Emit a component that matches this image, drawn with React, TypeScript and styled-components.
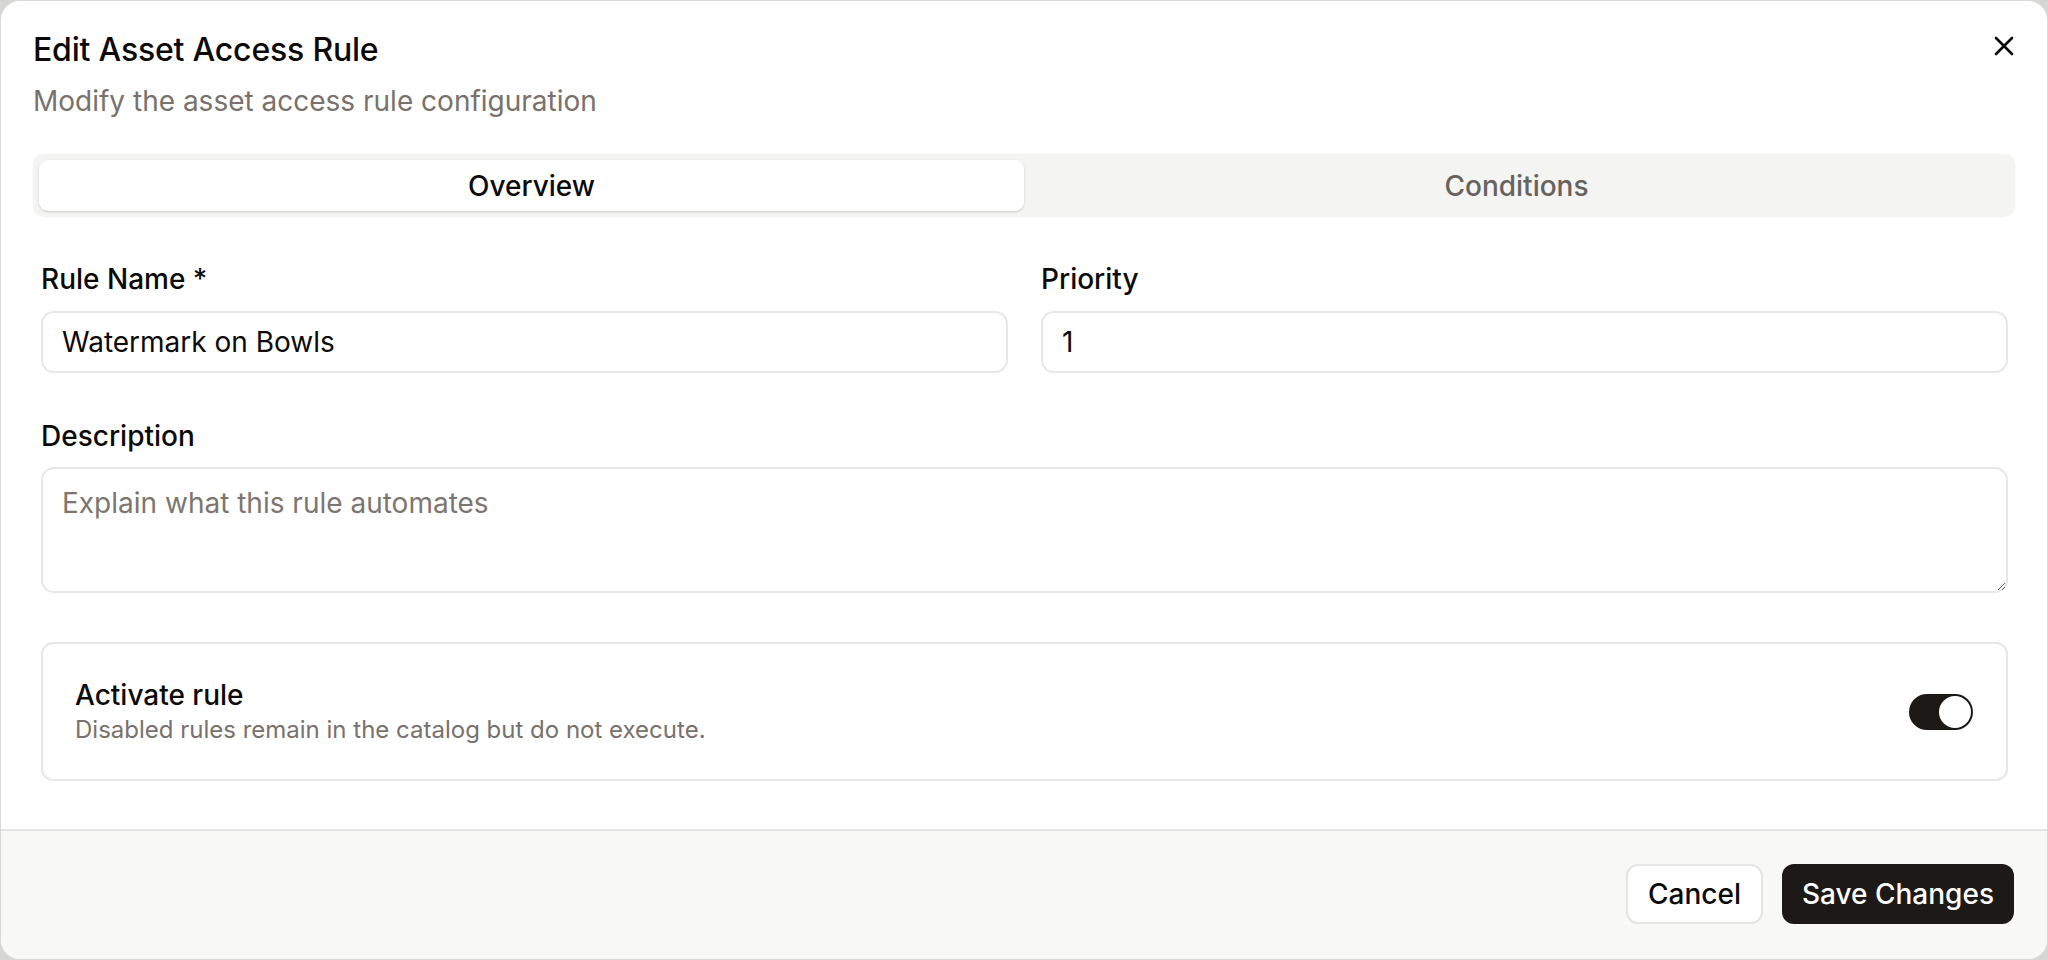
import React, { useState } from 'react';
import styled, { createGlobalStyle } from 'styled-components';

const GlobalStyle = createGlobalStyle`
  * {
    box-sizing: border-box;
  }

  html,
  body {
    margin: 0;
    padding: 0;
    background: #d6d6d4;
    font-family: Inter, 'Noto Sans', 'Liberation Sans', sans-serif;
    color: #0c0a09;
  }
`;

const Dialog = styled.div`
  height: 960px;
  display: flex;
  flex-direction: column;
  background: #ffffff;
  border: 1px solid #d9d9d7;
  border-radius: 20px;
  overflow: hidden;
`;

const DialogBody = styled.div`
  flex: 1;
  padding: 30px 32px 0 32px;
`;

const Header = styled.div`
  display: flex;
  justify-content: space-between;
  align-items: flex-start;
`;

const HeaderText = styled.div`
  display: flex;
  flex-direction: column;
  gap: 14px;
`;

const Title = styled.h2`
  margin: 0;
  font-size: 32px;
  line-height: 38px;
  font-weight: 500;
  letter-spacing: -0.2px;
  color: #0c0a09;
`;

const Subtitle = styled.p`
  margin: 0;
  font-size: 28px;
  line-height: 36px;
  color: #78716c;
`;

const CloseButton = styled.button`
  display: flex;
  align-items: center;
  justify-content: center;
  width: 30px;
  height: 30px;
  margin: 0 -4px 0 0;
  padding: 0;
  border: none;
  background: transparent;
  color: #0c0a09;
  cursor: pointer;
`;

const TabList = styled.div`
  display: grid;
  grid-template-columns: 1fr 1fr;
  height: 63px;
  margin-top: 35px;
  padding: 6px 6px;
  background: #f4f4f3;
  border-radius: 12px;
  box-shadow: 0 0 0 1px rgba(0, 0, 0, 0.015);
`;

const TabButton = styled.button<{ $active?: boolean }>`
  border: none;
  border-radius: 9px;
  font-family: inherit;
  font-size: 28px;
  font-weight: 500;
  cursor: pointer;
  background: ${(p) => (p.$active ? '#ffffff' : 'transparent')};
  color: ${(p) => (p.$active ? '#0c0a09' : '#67625e')};
  box-shadow: ${(p) =>
    p.$active ? '0 1px 3px rgba(0, 0, 0, 0.12), 0 1px 2px rgba(0, 0, 0, 0.06)' : 'none'};
`;

const TabPanel = styled.div`
  display: flex;
  flex-direction: column;
  gap: 46px;
  margin-top: 45px;
  padding: 0 7px 0 8px;
`;

const FieldRow = styled.div`
  display: grid;
  grid-template-columns: 1fr 1fr;
  gap: 33px;
`;

const Field = styled.div`
  display: flex;
  flex-direction: column;
  gap: 15px;
`;

const Label = styled.label`
  font-size: 28px;
  line-height: 34px;
  font-weight: 500;
  color: #0c0a09;
`;

const TextInput = styled.input`
  height: 62px;
  width: 100%;
  padding: 0 19px;
  border: 2px solid #e8e7e5;
  border-radius: 13px;
  font-family: inherit;
  font-size: 28px;
  color: #0c0a09;
  background: #ffffff;
  outline: none;
`;

const TextArea = styled.textarea`
  height: 126px;
  width: 100%;
  margin-top: -1px;
  padding: 16px 19px;
  border: 2px solid #e8e7e5;
  border-radius: 13px;
  font-family: inherit;
  font-size: 28px;
  line-height: 36px;
  color: #0c0a09;
  background: #ffffff;
  resize: vertical;
  outline: none;

  &::placeholder {
    color: #7d756f;
  }
`;

const SwitchCard = styled.div`
  display: flex;
  align-items: center;
  justify-content: space-between;
  height: 139px;
  margin-top: 3px;
  padding: 0 33px 0 32px;
  border: 2px solid #e8e7e5;
  border-radius: 12px;
`;

const SwitchText = styled.div`
  display: flex;
  flex-direction: column;
  gap: 3px;
`;

const SwitchTitle = styled.div`
  font-size: 28px;
  line-height: 34px;
  font-weight: 500;
  color: #0c0a09;
`;

const SwitchHint = styled.div`
  font-size: 24px;
  line-height: 30px;
  color: #78716c;
`;

const SwitchTrack = styled.button<{ $on: boolean }>`
  position: relative;
  width: 64px;
  height: 36px;
  padding: 0;
  border: none;
  border-radius: 18px;
  background: ${(p) => (p.$on ? '#1c1917' : '#e7e5e4')};
  cursor: pointer;
`;

const SwitchThumb = styled.span<{ $on: boolean }>`
  position: absolute;
  top: 2px;
  left: ${(p) => (p.$on ? '30px' : '2px')};
  width: 32px;
  height: 32px;
  border-radius: 50%;
  background: #ffffff;
`;

const Footer = styled.div`
  display: flex;
  align-items: center;
  justify-content: flex-end;
  gap: 19px;
  height: 130px;
  padding: 0 33px 2px 0;
  background: #f8f8f7;
  border-top: 2px solid #e6e5e3;
`;

const Button = styled.button<{ $primary?: boolean }>`
  height: 60px;
  padding: 0 20px;
  border-radius: 12px;
  font-family: inherit;
  font-size: 28px;
  font-weight: 500;
  cursor: pointer;
  background: ${(p) => (p.$primary ? '#1c1917' : '#ffffff')};
  color: ${(p) => (p.$primary ? '#ffffff' : '#0c0a09')};
  border: ${(p) => (p.$primary ? 'none' : '2px solid #e6e5e3')};
`;

const CloseIcon = () => (
  <svg width="20" height="20" viewBox="0 0 20 20" fill="none">
    <path d="M2 2L18 18M18 2L2 18" stroke="currentColor" strokeWidth="2.6" strokeLinecap="round" />
  </svg>
);

const App: React.FC = () => {
  const [tab, setTab] = useState<'overview' | 'conditions'>('overview');
  const [active, setActive] = useState(true);
  const [name, setName] = useState('Watermark on Bowls');
  const [priority, setPriority] = useState('1');

  return (
    <>
      <GlobalStyle />
      <Dialog>
        <DialogBody>
          <Header>
            <HeaderText>
              <Title>Edit Asset Access Rule</Title>
              <Subtitle>Modify the asset access rule configuration</Subtitle>
            </HeaderText>
            <CloseButton aria-label="Close">
              <CloseIcon />
            </CloseButton>
          </Header>

          <TabList>
            <TabButton $active={tab === 'overview'} onClick={() => setTab('overview')}>
              Overview
            </TabButton>
            <TabButton $active={tab === 'conditions'} onClick={() => setTab('conditions')}>
              Conditions
            </TabButton>
          </TabList>

          <TabPanel>
            <FieldRow>
              <Field>
                <Label>Rule Name *</Label>
                <TextInput value={name} onChange={(e) => setName(e.target.value)} />
              </Field>
              <Field>
                <Label>Priority</Label>
                <TextInput value={priority} onChange={(e) => setPriority(e.target.value)} />
              </Field>
            </FieldRow>

            <Field>
              <Label>Description</Label>
              <TextArea placeholder="Explain what this rule automates" />
            </Field>

            <SwitchCard>
              <SwitchText>
                <SwitchTitle>Activate rule</SwitchTitle>
                <SwitchHint>Disabled rules remain in the catalog but do not execute.</SwitchHint>
              </SwitchText>
              <SwitchTrack $on={active} onClick={() => setActive(!active)} aria-label="Activate rule">
                <SwitchThumb $on={active} />
              </SwitchTrack>
            </SwitchCard>
          </TabPanel>
        </DialogBody>

        <Footer>
          <Button>Cancel</Button>
          <Button $primary>Save Changes</Button>
        </Footer>
      </Dialog>
    </>
  );
};

export default App;
